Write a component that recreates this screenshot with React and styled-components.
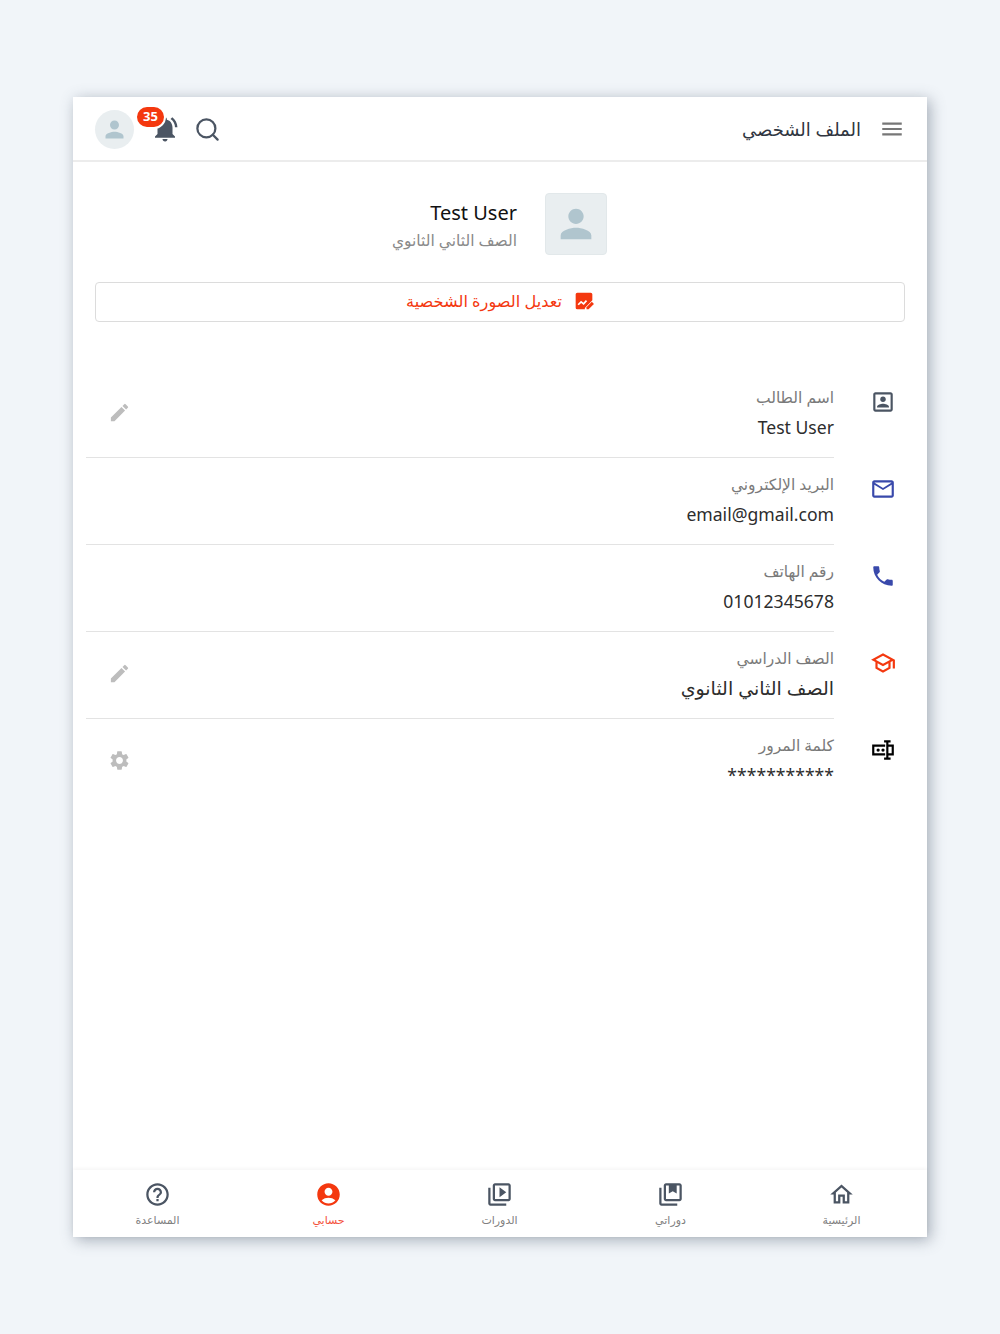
import React from "react";
import styled, { createGlobalStyle } from "styled-components";
import {
  MdMenu,
  MdPerson,
  MdEdit,
  MdSettings,
  MdMailOutline,
  MdPhone,
  MdHelpOutline,
  MdAccountCircle,
  MdOutlineVideoLibrary,
  MdOutlineHome,
  MdNotificationsActive,
} from "react-icons/md";
import { LuSearch } from "react-icons/lu";

const GlobalStyle = createGlobalStyle`
  html, body {
    margin: 0;
    padding: 0;
    background: #f1f5f9;
    font-family: "Noto Sans", "Open Sans", "DejaVu Sans", sans-serif;
  }
`;

const Page = styled.div`
  width: 1000px;
  height: 1334px;
  padding: 97px 73px;
  box-sizing: border-box;
  direction: rtl;
`;

const Frame = styled.div`
  height: 1140px;
  background: #fff;
  display: flex;
  flex-direction: column;
  box-shadow: 3px 3px 14px rgba(71, 85, 105, 0.45);
`;

const Header = styled.header`
  height: 65px;
  flex: none;
  box-sizing: border-box;
  border-bottom: 2px solid #ececec;
  display: flex;
  align-items: center;
  justify-content: space-between;
  padding: 1px 22px 0 22px;
`;

const HeaderSide = styled.div`
  display: flex;
  align-items: center;
  gap: ${(props) => props.$gap}px;
`;

const Title = styled.h1`
  margin: 0;
  font-size: 18px;
  font-weight: 400;
  color: #303641;
`;

const MenuIcon = styled(MdMenu)`
  font-size: 26px;
  color: #777;
`;

const SearchIcon = styled(LuSearch)`
  font-size: 27px;
  color: #4b5563;
`;

const BellWrap = styled.div`
  position: relative;
  width: 30px;
  height: 30px;
  margin-left: 2px;
  color: #4b5563;
  font-size: 30px;
  line-height: 0;
`;

const Badge = styled.span`
  position: absolute;
  top: -9px;
  right: 14px;
  min-width: 27px;
  height: 20px;
  box-sizing: content-box;
  border: 2px solid #fff;
  border-radius: 12px;
  background: #f4380f;
  color: #fff;
  font-size: 13px;
  font-weight: 700;
  line-height: 19px;
  text-align: center;
`;

const HeaderAvatar = styled.div`
  width: 39px;
  height: 39px;
  border-radius: 50%;
  background: #e9eef0;
  color: #b0c5ce;
  display: flex;
  align-items: center;
  justify-content: center;
  font-size: 27px;
`;

const Main = styled.main`
  flex: 1;
  min-height: 0;
`;

const ProfileRow = styled.section`
  display: flex;
  justify-content: center;
  align-items: center;
  gap: 28px;
  padding-top: 31px;
  height: 62px;
`;

const ProfileAvatar = styled.div`
  width: 62px;
  height: 62px;
  box-sizing: border-box;
  border: 1px solid #e2e8ea;
  border-radius: 4px;
  background: #e9eef0;
  color: #b0c5ce;
  display: flex;
  align-items: center;
  justify-content: center;
  font-size: 46px;
`;

const ProfileText = styled.div`
  width: 124px;
  display: flex;
  flex-direction: column;
  padding-bottom: 2px;
`;

const ProfileName = styled.div`
  font-size: 20px;
  line-height: 33px;
  color: #111;
`;

const ProfileGrade = styled.div`
  font-size: 15.5px;
  line-height: 22px;
  color: #8a8a8a;
  white-space: nowrap;
`;

const EditPhoto = styled.button`
  display: flex;
  width: 810px;
  height: 40px;
  margin: 27px 22px 0;
  box-sizing: border-box;
  align-items: center;
  justify-content: center;
  gap: 12px;
  padding: 0 0 2px;
  border: 1px solid #dcdcdc;
  border-radius: 4px;
  background: #fff;
  color: #f4380f;
  font-family: inherit;
  font-size: 16.2px;
`;

const Rows = styled.ul`
  list-style: none;
  margin: 49px 0 0;
  padding: 0;
`;

const Row = styled.li`
  display: flex;
  height: 87px;
`;

const RowIcon = styled.div`
  width: 93px;
  flex: none;
  box-sizing: border-box;
  padding: 18px 31px 0 0;
  font-size: 26px;
  line-height: 0;
  color: ${(props) => props.$color};
`;

const RowBody = styled.div`
  width: 748px;
  box-sizing: border-box;
  display: flex;
  align-items: center;
  justify-content: space-between;
  padding-left: 22px;
  border-bottom: 1px solid ${(props) => (props.$last ? "transparent" : "#e3e3e3")};
`;

const RowText = styled.div`
  display: flex;
  flex-direction: column;
`;

const Label = styled.div`
  font-size: 15.5px;
  line-height: 26px;
  color: #7a7a7a;
`;

const Value = styled.div`
  font-size: ${(props) => (props.$arabic ? "19px" : "17.6px")};
  line-height: 34px;
  color: #2d2d2d;
`;

const Action = styled.div`
  font-size: 23px;
  line-height: 0;
  color: #bdbdbd;
  padding-bottom: 4px;
`;

const BottomNav = styled.nav`
  height: 67px;
  flex: none;
  display: grid;
  grid-template-columns: repeat(5, 171px);
  box-shadow: 0 -1px 4px rgba(0, 0, 0, 0.05);
`;

const NavItem = styled.div`
  display: flex;
  flex-direction: column;
  align-items: center;
  padding-top: 11px;
  gap: 3px;
  color: ${(props) => (props.$active ? "#f4380f" : "#4b5563")};
  font-size: 27px;
  line-height: 0;
`;

const NavLabel = styled.span`
  font-size: 11px;
  line-height: 18px;
  color: ${(props) => (props.$active ? "#f4503a" : "#808080")};
`;

// drawn by hand, the icon packs only have near matches for these
const Icon = ({ size = "1em", children }) => (
  <svg width={size} height={size} viewBox="0 0 24 24" fill="currentColor">
    {children}
  </svg>
);

const PhotoIcon = () => (
  <Icon size={20}>
    <path d="M4 2h16a2 2 0 0 1 2 2v7l-9 9.5V22H4a2 2 0 0 1-2-2V4a2 2 0 0 1 2-2z" />
    <path d="M5 16.5l3.5-3.5 3 2.5 3.5-4" fill="none" stroke="#fff" strokeWidth="2" />
    <path d="M15 22v-2.6l6.4-6.4 2.5 2.5-6.4 6.5z" />
  </Icon>
);

const ContactIcon = () => (
  <Icon>
    <path d="M19 3H5c-1.1 0-2 .9-2 2v14c0 1.1.9 2 2 2h14c1.1 0 2-.9 2-2V5c0-1.1-.9-2-2-2zm0 16H5V5h14v14z" />
    <circle cx="12" cy="9.5" r="2.5" />
    <path d="M6.5 17v-.6c0-1.8 3.6-2.8 5.5-2.8s5.5 1 5.5 2.8v.6z" />
  </Icon>
);

const SchoolIcon = () => (
  <Icon>
    <path d="M12 3L1 9l4 2.18v6L12 21l7-3.82v-6l2-1.09V17h2V9L12 3zm6.82 6L12 12.72 5.18 9 12 5.28 18.82 9zM17 16l-5 2.72L7 16v-3.73L12 15l5-2.73V16z" />
  </Icon>
);

const PasswordIcon = () => (
  <Icon>
    <path d="M17 7V5h2V3h-6v2h2v14h-2v2h6v-2h-2v-2h5V7h-5zM2 7v10h12v-2H4V9h10V7H2zm18 8h-3V9h3v6z" />
    <circle cx="7.5" cy="12" r="1.5" />
    <circle cx="12" cy="12" r="1.5" />
  </Icon>
);

const LibraryIcon = () => (
  <Icon>
    <path d="M4 6H2v14c0 1.1.9 2 2 2h14v-2H4V6z" />
    <path d="M20 2H8c-1.1 0-2 .9-2 2v12c0 1.1.9 2 2 2h12c1.1 0 2-.9 2-2V4c0-1.1-.9-2-2-2zm0 14H8V4h2.5v7l3.5-2 3.5 2V4H20v12z" />
  </Icon>
);

const rows = [
  { icon: <ContactIcon />, color: "#4b5563", label: "اسم الطالب", value: "Test User", action: <MdEdit /> },
  { icon: <MdMailOutline />, color: "#3949ab", label: "البريد الإلكتروني", value: "email@gmail.com" },
  { icon: <MdPhone />, color: "#3949ab", label: "رقم الهاتف", value: "01012345678" },
  { icon: <SchoolIcon />, color: "#f4380f", label: "الصف الدراسي", value: "الصف الثاني الثانوي", arabic: true, action: <MdEdit /> },
  { icon: <PasswordIcon />, color: "#000", label: "كلمة المرور", value: "***********", action: <MdSettings /> },
];

const navItems = [
  { icon: <MdOutlineHome />, label: "الرئيسية" },
  { icon: <LibraryIcon />, label: "دوراتي" },
  { icon: <MdOutlineVideoLibrary />, label: "الدورات" },
  { icon: <MdAccountCircle />, label: "حسابي", active: true },
  { icon: <MdHelpOutline />, label: "المساعدة" },
];

const App = () => {
  return (
    <Page>
      <GlobalStyle />
      <Frame>
        <Header>
          <HeaderSide $gap={18}>
            <MenuIcon />
            <Title>الملف الشخصي</Title>
          </HeaderSide>
          <HeaderSide $gap={14}>
            <SearchIcon />
            <BellWrap>
              <MdNotificationsActive />
              <Badge>35</Badge>
            </BellWrap>
            <HeaderAvatar>
              <MdPerson />
            </HeaderAvatar>
          </HeaderSide>
        </Header>
        <Main>
          <ProfileRow>
            <ProfileAvatar>
              <MdPerson />
            </ProfileAvatar>
            <ProfileText>
              <ProfileName>Test User</ProfileName>
              <ProfileGrade>الصف الثاني الثانوي</ProfileGrade>
            </ProfileText>
          </ProfileRow>
          <EditPhoto>
            <PhotoIcon />
            تعديل الصورة الشخصية
          </EditPhoto>
          <Rows>
            {rows.map((row, index) => (
              <Row key={row.label}>
                <RowIcon $color={row.color}>{row.icon}</RowIcon>
                <RowBody $last={index === rows.length - 1}>
                  <RowText>
                    <Label>{row.label}</Label>
                    <Value $arabic={row.arabic}>{row.value}</Value>
                  </RowText>
                  {row.action && <Action>{row.action}</Action>}
                </RowBody>
              </Row>
            ))}
          </Rows>
        </Main>
        <BottomNav>
          {navItems.map((item) => (
            <NavItem key={item.label} $active={item.active}>
              {item.icon}
              <NavLabel $active={item.active}>{item.label}</NavLabel>
            </NavItem>
          ))}
        </BottomNav>
      </Frame>
    </Page>
  );
};

export default App;
